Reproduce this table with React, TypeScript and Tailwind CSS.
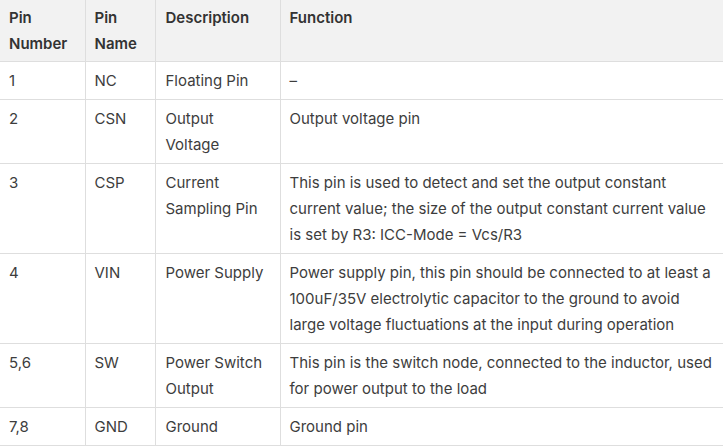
const rows: { num: string; name: string; desc: string[]; fn: string[] }[] = [
  { num: '1', name: 'NC', desc: ['Floating Pin'], fn: ['–'] },
  { num: '2', name: 'CSN', desc: ['Output', 'Voltage'], fn: ['Output voltage pin'] },
  {
    num: '3',
    name: 'CSP',
    desc: ['Current', 'Sampling Pin'],
    fn: [
      'This pin is used to detect and set the output constant',
      'current value; the size of the output constant current value',
      'is set by R3: ICC-Mode = Vcs/R3',
    ],
  },
  {
    num: '4',
    name: 'VIN',
    desc: ['Power Supply'],
    fn: [
      'Power supply pin, this pin should be connected to at least a',
      '100uF/35V electrolytic capacitor to the ground to avoid',
      'large voltage fluctuations at the input during operation',
    ],
  },
  {
    num: '5,6',
    name: 'SW',
    desc: ['Power Switch', 'Output'],
    fn: ['This pin is the switch node, connected to the inductor, used', 'for power output to the load'],
  },
  { num: '7,8', name: 'GND', desc: ['Ground'], fn: ['Ground pin'] },
];

const Lines = ({ lines }: { lines: string[] }) => (
  <>
    {lines.map((l, i) => (
      <div key={i} className="whitespace-nowrap">
        {l}
      </div>
    ))}
  </>
);

export default function App() {
  return (
    <div className="w-[723px] h-[446px] overflow-hidden bg-white font-['Inter',sans-serif] text-[15px] leading-[26px] text-[#3d3d3d]">
      <table className="border-collapse table-fixed w-[723px]">
        <colgroup>
          <col className="w-[85px]" />
          <col className="w-[70px]" />
          <col className="w-[125px]" />
          <col className="w-[443px]" />
        </colgroup>
        <thead>
          <tr className="bg-[#f2f2f2] border-b border-[#dedede] text-left align-top">
            <th className="pl-[9px] pr-2 pt-[5px] pb-[4px] font-semibold text-[#333]">
              Pin
              <br />
              Number
            </th>
            <th className="pl-[9px] pr-2 pt-[5px] pb-[4px] font-semibold text-[#333] border-l border-[#dedede]">
              Pin
              <br />
              Name
            </th>
            <th className="pl-[10px] pr-2 pt-[5px] pb-[4px] font-semibold text-[#333] border-l border-[#dedede]">
              Description
            </th>
            <th className="pl-[9px] pr-2 pt-[5px] pb-[4px] font-semibold text-[#333] border-l border-[#dedede]">
              Function
            </th>
          </tr>
        </thead>
        <tbody>
          {rows.map((r) => (
            <tr key={r.num} className="border-b border-[#dedede] align-top">
              <td className="pl-[9px] pr-2 pt-[6px] pb-[5px]">{r.num}</td>
              <td className="pl-[9px] pr-2 pt-[6px] pb-[5px] border-l border-[#dedede]">{r.name}</td>
              <td className="pl-[10px] pr-2 pt-[6px] pb-[5px] border-l border-[#dedede]">
                <Lines lines={r.desc} />
              </td>
              <td className="pl-[9px] pr-0 pt-[6px] pb-[5px] border-l border-[#dedede]">
                <Lines lines={r.fn} />
              </td>
            </tr>
          ))}
        </tbody>
      </table>
    </div>
  );
}
